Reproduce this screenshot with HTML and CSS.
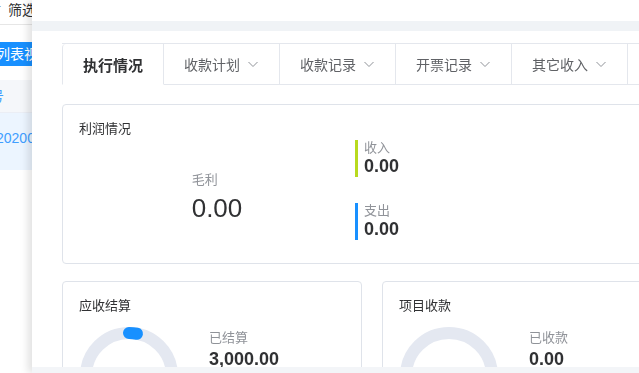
FILE: index.html
```html
<!DOCTYPE html>
<html lang="zh-CN">
<head>
<meta charset="utf-8">
<title>执行情况</title>
<link rel="stylesheet" href="styles.css">
</head>
<body>
<div class="page">
  <div class="toolbar"><span class="tool-icon">r</span><span class="filter">筛选</span></div>
  <div class="btn-row"><span class="btn-primary">列表视图</span></div>
  <div class="table-head"><span class="th">编号</span></div>
  <div class="table-row"><span class="td">2020030001</span></div>
</div>

<div class="drawer">
  <div class="drawer-top"></div>
  <div class="drawer-band"></div>
  <div class="drawer-body">
    <div class="content">
      <div class="tabs">
        <div class="tab active">执行情况</div>
        <div class="tab">收款计划<svg class="chev" viewBox="0 0 12 12"><polyline points="1.5,4 6,8.5 10.5,4"/></svg></div>
        <div class="tab">收款记录<svg class="chev" viewBox="0 0 12 12"><polyline points="1.5,4 6,8.5 10.5,4"/></svg></div>
        <div class="tab">开票记录<svg class="chev" viewBox="0 0 12 12"><polyline points="1.5,4 6,8.5 10.5,4"/></svg></div>
        <div class="tab">其它收入<svg class="chev" viewBox="0 0 12 12"><polyline points="1.5,4 6,8.5 10.5,4"/></svg></div>
        <div class="tab">其它支出<svg class="chev" viewBox="0 0 12 12"><polyline points="1.5,4 6,8.5 10.5,4"/></svg></div>
        <div class="tab-fill"></div>
      </div>

      <div class="card profit">
        <div class="card-title">利润情况</div>
        <div class="profit-body">
          <div class="gross-col">
            <div class="gross">
              <div class="gross-label">毛利</div>
              <div class="gross-value">0.00</div>
            </div>
          </div>
          <div class="flow-col">
            <div class="flow income">
              <div class="flow-label">收入</div>
              <div class="flow-value">0.00</div>
            </div>
            <div class="flow expense">
              <div class="flow-label">支出</div>
              <div class="flow-value">0.00</div>
            </div>
          </div>
        </div>
      </div>

      <div class="card-row">
        <div class="card half">
          <div class="card-title">应收结算</div>
          <div class="ring-body">
            <svg class="ring" viewBox="0 0 100 100">
              <circle class="ring-track" cx="50" cy="50" r="43"/>
              <path class="ring-bar" d="M 50 7 A 43 43 0 0 1 58 7.75"/>
            </svg>
            <div class="ring-info">
              <div class="info-label">已结算</div>
              <div class="info-value">3,000.00</div>
            </div>
          </div>
        </div>
        <div class="card half">
          <div class="card-title">项目收款</div>
          <div class="ring-body">
            <svg class="ring" viewBox="0 0 100 100">
              <circle class="ring-track" cx="50" cy="50" r="43"/>
            </svg>
            <div class="ring-info">
              <div class="info-label">已收款</div>
              <div class="info-value">0.00</div>
            </div>
          </div>
        </div>
      </div>
    </div>
  </div>
  <div class="drawer-foot"></div>
</div>
</body>
</html>
```
FILE: styles.css
```css
* { box-sizing: border-box; }
html, body {
  margin: 0;
  padding: 0;
  width: 639px;
  height: 373px;
  overflow: hidden;
  background: #fff;
  font-family: "Liberation Sans", "Noto Sans CJK SC", sans-serif;
  color: #303133;
}

/* underlying page */
.page { width: 639px; }
.toolbar {
  height: 25px;
  border-bottom: 1px solid #e6e6e6;
  display: flex;
  align-items: flex-start;
  font-size: 14px;
  line-height: 20px;
}
.tool-icon { width: 8px; color: #606266; font-size: 11px; line-height: 16px; margin-left: -3px; }
.filter { color: #303133; margin-left: 3px; }
.btn-row { padding-top: 17px; height: 55px; }
.btn-primary {
  display: inline-block;
  height: 24px;
  line-height: 24px;
  padding: 0 8px;
  margin-left: -12px;
  background: #1890ff;
  color: #fff;
  font-size: 14px;
  white-space: nowrap;
}
.table-head {
  height: 33px;
  background: #f5f7fa;
  border-bottom: 1px solid #ebeef5;
  font-size: 14px;
  line-height: 33px;
  white-space: nowrap;
}
.th { margin-left: -24px; color: #409eff; }
.table-row {
  height: 57px;
  background: #ecf5ff;
  font-size: 14px;
  line-height: 50px;
  white-space: nowrap;
}
.td { margin-left: -4px; color: #409eff; }

/* drawer overlay */
.drawer {
  position: fixed;
  top: 0;
  left: 32px;
  width: 700px;
  height: 373px;
  background: #fff;
  box-shadow: -4px 0 8px rgba(0, 0, 0, 0.12);
  display: flex;
  flex-direction: column;
}
.drawer-top { height: 21px; flex: none; }
.drawer-band { height: 10px; background: #f0f3f6; flex: none; }
.drawer-body { flex: 1; overflow: hidden; padding: 12px 30px 0; }
.drawer-foot { height: 6px; background: #f3f5f8; flex: none; }
.content { width: 620px; }

/* tabs */
.tabs {
  display: flex;
  height: 41px;
  border-top: 1px solid #e4e7ed;
}
.tab {
  height: 41px;
  padding: 0 20px 0 20px;
  border-right: 1px solid #e4e7ed;
  border-bottom: 1px solid #e4e7ed;
  display: flex;
  align-items: center;
  font-size: 14px;
  color: #606266;
  white-space: nowrap;
  flex: none;
}
.tab.active {
  border-left: 1px solid #e4e7ed;
  border-bottom-color: transparent;
  border-top-left-radius: 4px;
  font-size: 15px;
  font-weight: bold;
  color: #303133;
}
.tab-fill { flex: 1; border-bottom: 1px solid #e4e7ed; }
.chev {
  width: 12px;
  height: 12px;
  margin-left: 7px;
  fill: none;
  stroke: #909399;
  stroke-width: 1;
}

/* cards */
.card {
  border: 1px solid #dfe3ea;
  border-radius: 4px;
  background: #fff;
  padding: 15px 16px 23px;
}
.profit { margin-top: 20px; }
.card-title {
  font-size: 13px;
  line-height: 18px;
  color: #303133;
}
.profit-body {
  display: flex;
  align-items: flex-start;
  margin-top: 2px;
}
.gross-col {
  width: 276px;
  display: flex;
  justify-content: center;
  padding-top: 31px;
}
.gross-label { font-size: 13px; line-height: 18px; color: #909399; }
.gross-value { font-size: 26px; line-height: 30px; margin-top: 4px; color: #303133; }
.flow-col { display: flex; flex-direction: column; gap: 26px; }
.flow {
  border-left: 3px solid #b8da1f;
  padding-left: 6px;
  height: 37px;
}
.flow.expense { border-left-color: #1890ff; }
.flow-label { font-size: 13px; line-height: 15px; color: #909399; }
.flow-value { font-size: 18px; line-height: 22px; font-weight: bold; color: #303133; }

.card-row {
  display: flex;
  gap: 20px;
  margin-top: 17px;
}
.half { width: 300px; height: 160px; }
.ring-body {
  display: flex;
  align-items: flex-start;
  margin-top: 11px;
}
.ring { width: 100px; height: 100px; flex: none; }
.ring-track { fill: none; stroke: #e4e8f1; stroke-width: 12; }
.ring-bar { fill: none; stroke: #1890ff; stroke-width: 12; stroke-linecap: round; }
.ring-info { margin-left: 30px; padding-top: 3px; }
.info-label { font-size: 13px; line-height: 18px; color: #909399; }
.info-value { font-size: 18px; line-height: 24px; font-weight: bold; color: #303133; }
```
